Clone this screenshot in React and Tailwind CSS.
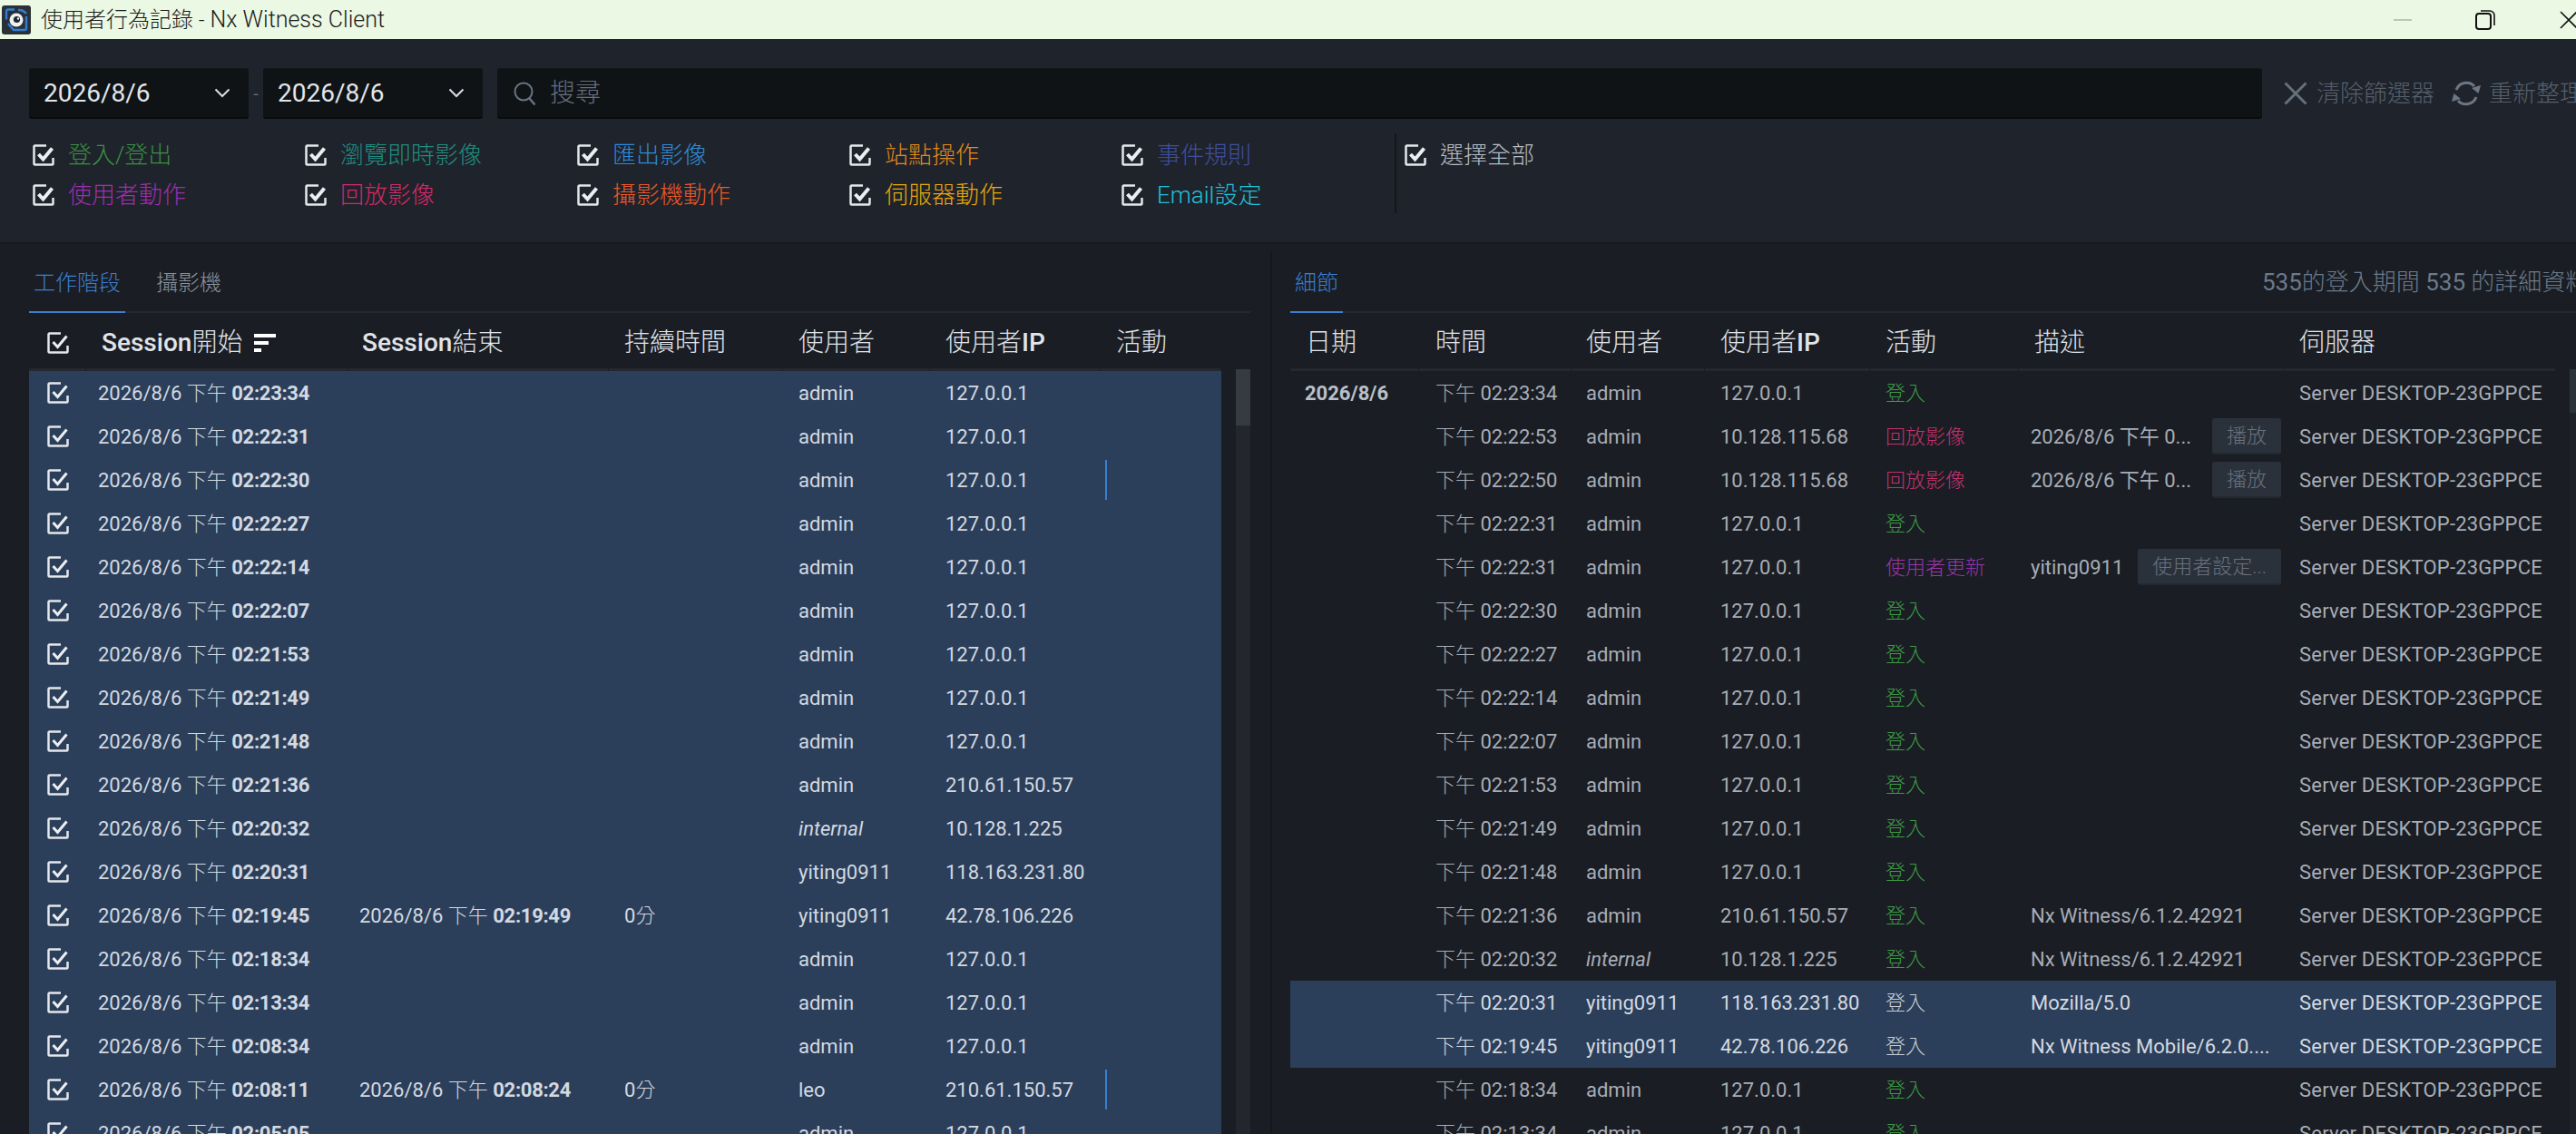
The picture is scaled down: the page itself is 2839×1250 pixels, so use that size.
import React from 'react';

const FONT = "font-['Roboto','Noto_Sans_CJK_TC',sans-serif]";

const filters = [
  { label: '登入/登出', color: 'text-[#3a9142]' },
  { label: '瀏覽即時影像', color: 'text-[#1f8d80]' },
  { label: '匯出影像', color: 'text-[#2f8ad6]' },
  { label: '站點操作', color: 'text-[#e58a1c]' },
  { label: '事件規則', color: 'text-[#3f4f9f]' },
  { label: '使用者動作', color: 'text-[#9c2fae]' },
  { label: '回放影像', color: 'text-[#d42a68]' },
  { label: '攝影機動作', color: 'text-[#e8592a]' },
  { label: '伺服器動作', color: 'text-[#e8a80c]' },
  { label: 'Email設定', color: 'text-[#22c0d8]' },
];

const sessions = [
  ['02:23:34', '', false, 'admin', '127.0.0.1'],
  ['02:22:31', '', false, 'admin', '127.0.0.1'],
  ['02:22:30', '', false, 'admin', '127.0.0.1', true],
  ['02:22:27', '', false, 'admin', '127.0.0.1'],
  ['02:22:14', '', false, 'admin', '127.0.0.1'],
  ['02:22:07', '', false, 'admin', '127.0.0.1'],
  ['02:21:53', '', false, 'admin', '127.0.0.1'],
  ['02:21:49', '', false, 'admin', '127.0.0.1'],
  ['02:21:48', '', false, 'admin', '127.0.0.1'],
  ['02:21:36', '', false, 'admin', '210.61.150.57'],
  ['02:20:32', '', false, 'internal', '10.128.1.225'],
  ['02:20:31', '', false, 'yiting0911', '118.163.231.80'],
  ['02:19:45', '02:19:49', true, 'yiting0911', '42.78.106.226'],
  ['02:18:34', '', false, 'admin', '127.0.0.1'],
  ['02:13:34', '', false, 'admin', '127.0.0.1'],
  ['02:08:34', '', false, 'admin', '127.0.0.1'],
  ['02:08:11', '02:08:24', true, 'leo', '210.61.150.57', true],
  ['02:05:05', '', false, 'admin', '127.0.0.1'],
];

const login = { name: '登入', color: 'text-[#3c9a46]' };
const playback = { name: '回放影像', color: 'text-[#c2326e]' };
const userUpdate = { name: '使用者更新', color: 'text-[#9c35a8]' };

const details = [
  { time: '02:23:34', user: 'admin', ip: '127.0.0.1', act: login },
  { time: '02:22:53', user: 'admin', ip: '10.128.115.68', act: playback, desc: '2026/8/6 下午 0...', btn: '播放' },
  { time: '02:22:50', user: 'admin', ip: '10.128.115.68', act: playback, desc: '2026/8/6 下午 0...', btn: '播放' },
  { time: '02:22:31', user: 'admin', ip: '127.0.0.1', act: login },
  { time: '02:22:31', user: 'admin', ip: '127.0.0.1', act: userUpdate, desc: 'yiting0911', btn: '使用者設定...' },
  { time: '02:22:30', user: 'admin', ip: '127.0.0.1', act: login },
  { time: '02:22:27', user: 'admin', ip: '127.0.0.1', act: login },
  { time: '02:22:14', user: 'admin', ip: '127.0.0.1', act: login },
  { time: '02:22:07', user: 'admin', ip: '127.0.0.1', act: login },
  { time: '02:21:53', user: 'admin', ip: '127.0.0.1', act: login },
  { time: '02:21:49', user: 'admin', ip: '127.0.0.1', act: login },
  { time: '02:21:48', user: 'admin', ip: '127.0.0.1', act: login },
  { time: '02:21:36', user: 'admin', ip: '210.61.150.57', act: login, desc: 'Nx Witness/6.1.2.42921' },
  { time: '02:20:32', user: 'internal', ip: '10.128.1.225', act: login, desc: 'Nx Witness/6.1.2.42921' },
  { time: '02:20:31', user: 'yiting0911', ip: '118.163.231.80', act: login, desc: 'Mozilla/5.0', selected: true },
  { time: '02:19:45', user: 'yiting0911', ip: '42.78.106.226', act: login, desc: 'Nx Witness Mobile/6.2.0....', selected: true },
  { time: '02:18:34', user: 'admin', ip: '127.0.0.1', act: login },
  { time: '02:13:34', user: 'admin', ip: '127.0.0.1', act: login },
];

const LEFT_COLS = 'grid grid-cols-[63px_289px_287px_192px_162px_188px_133px]';
const RIGHT_COLS = 'grid grid-cols-[142px_168px_147px_182px_164px_292px_300px]';

const CheckBox = ({ heavy }) => (
  <svg width="24" height="24" viewBox="0 0 24 24" fill="none" className="shrink-0">
    <path d="M15 1.500H2.500a1 1 0 0 0-1 1v19a1 1 0 0 0 1 1h19a1 1 0 0 0 1-1V15" stroke="#e4e7eb" strokeWidth="2.500" />
    <path d="M6.500 11l5 5.500L21.500 4.500" stroke="#eceef1" strokeWidth={heavy ? 4 : 3} />
  </svg>
);

const Logo = () => (
  <svg width="32" height="32" viewBox="0 0 32 32" className="shrink-0">
    <rect x="0" y="0" width="32" height="32" rx="3" fill="#2b3037" />
    <path d="M14 4.500H7a2 2 0 0 0-2 2v9" stroke="#2f7fd6" strokeWidth="2.400" fill="none" />
    <path d="M7 20l6 7h12a2 2 0 0 0 2-2V12" stroke="#2f7fd6" strokeWidth="2.400" fill="none" />
    <path d="M18 5a11 11 0 0 1 9 4" stroke="#2f7fd6" strokeWidth="2.400" fill="none" />
    <circle cx="16" cy="16" r="7.500" fill="#eef1f3" />
    <circle cx="16.500" cy="15.500" r="3.600" fill="#20252b" />
    <circle cx="18" cy="14.500" r="1.200" fill="#eef1f3" />
  </svg>
);

const WindowControls = () => (
  <div className="ml-auto flex items-center">
    <div className="h-[2px] w-[20px] bg-[#bcc6b8]" />
    <svg width="22" height="22" viewBox="0 0 22 22" fill="none" className="ml-[70px]">
      <rect x="1" y="4" width="16" height="17" rx="3" stroke="#111" strokeWidth="2" />
      <path d="M6 1h10a5 5 0 0 1 5 5v11" stroke="#111" strokeWidth="1.600" />
    </svg>
    <svg width="20" height="20" viewBox="0 0 20 20" fill="none" className="ml-[71px] mr-[-2px]">
      <path d="M1 1l18 18M19 1L1 19" stroke="#111" strokeWidth="1.600" />
    </svg>
  </div>
);

const Chevron = () => (
  <svg width="18" height="11" viewBox="0 0 18 11" fill="none">
    <path d="M1.500 1.500L9 9l7.500-7.500" stroke="#d8dde3" strokeWidth="2" />
  </svg>
);

const DateBox = ({ value }) => (
  <div className="flex h-[56px] w-[242px] shrink-0 items-center justify-between rounded-[3px] border-b-2 border-b-[#090b0d] border-t border-t-[#14181c] bg-[#0f1316] pl-[16px] pr-[20px]">
    <span className="text-[28px] text-[#e2e6ea]">{value}</span>
    <Chevron />
  </div>
);

const SearchIcon = () => (
  <svg width="26" height="28" viewBox="0 0 26 28" fill="none" className="shrink-0">
    <circle cx="11" cy="12" r="9.500" stroke="#6a7482" strokeWidth="2" />
    <path d="M17.500 19.500l6 7" stroke="#6a7482" strokeWidth="2.400" />
  </svg>
);

const ClearIcon = () => (
  <svg width="26" height="26" viewBox="0 0 26 26" fill="none" className="shrink-0">
    <path d="M1.500 1.500l23 23M24.500 1.500l-23 23" stroke="#66707c" strokeWidth="3" />
  </svg>
);

const RefreshIcon = () => (
  <svg width="34" height="30" viewBox="0 0 34 30" fill="none" className="shrink-0">
    <path d="M6 11A12 12 0 0 1 26 7" stroke="#6c7785" strokeWidth="3" />
    <path d="M33 6l-2.500 9-7.500-6z" fill="#6c7785" />
    <path d="M28 19A12 12 0 0 1 8 23" stroke="#6c7785" strokeWidth="3" />
    <path d="M1 24l2.500-9 7.500 6z" fill="#6c7785" />
  </svg>
);

const SortIcon = () => (
  <div className="ml-[13px] flex flex-col gap-[4px]">
    <div className="h-[4px] w-[24px] bg-white" />
    <div className="h-[4px] w-[16px] bg-white" />
    <div className="h-[4px] w-[8px] bg-white" />
  </div>
);

const Toolbar = () => (
  <div className="h-[226px] shrink-0 border-b-2 border-[#15181c] bg-[#1f232b] pl-[32px] pt-[32px]">
    <div className="flex items-center">
      <DateBox value="2026/8/6" />
      <span className="w-[16px] shrink-0 text-center text-[20px] text-[#5f6873]">-</span>
      <DateBox value="2026/8/6" />
      <div className="ml-[16px] flex h-[56px] w-[1945px] shrink-0 items-center rounded-[3px] border-b-2 border-b-[#090b0d] border-t border-t-[#14181c] bg-[#0f1316] pl-[18px]">
        <SearchIcon />
        <span className="ml-[14px] text-[28px] font-light text-[#666f7b]">搜尋</span>
      </div>
      <div className="ml-[24px] flex shrink-0 items-center">
        <ClearIcon />
        <span className="ml-[10px] text-[26px] font-light text-[#56606c]">清除篩選器</span>
      </div>
      <div className="ml-[18px] flex shrink-0 items-center">
        <RefreshIcon />
        <span className="ml-[8px] whitespace-nowrap text-[26px] font-light text-[#56606c]">重新整理</span>
      </div>
    </div>
    <div className="mt-[16px] flex">
      <div className="ml-[4px] mt-[8px] grid w-[1500px] grid-cols-[repeat(5,300px)] content-start gap-y-[12px]">
        {filters.map(item => (
          <div key={item.label} className="flex h-[32px] items-center gap-[15px]">
            <CheckBox heavy />
            <span className={`text-[26px] font-light leading-[32px] ${item.color}`}>{item.label}</span>
          </div>
        ))}
      </div>
      <div className="ml-[1px] h-[88px] w-[2px] bg-[#14171b]" />
      <div className="ml-[9px] mt-[8px] flex h-[32px] items-center gap-[15px]">
        <CheckBox heavy />
        <span className="text-[26px] font-light text-[#b6bcc4]">選擇全部</span>
      </div>
    </div>
  </div>
);

const Tab = ({ label, active, className = '' }) => (
  <div
    className={`-mb-[2px] h-[76px] shrink-0 whitespace-nowrap border-b-2 px-[5px] pt-[25px] text-[24px] font-light leading-[36px] ${
      active ? 'border-[#3b7fd0] text-[#3b7fd0]' : 'border-transparent text-[#8a929c]'
    } ${className}`}
  >
    {label}
  </div>
);

const HeadCell = ({ children, pad = 'pl-[17px]' }) => (
  <div className={`mr-px flex h-[64px] items-center whitespace-nowrap border-b-[3px] border-[#24282f] pt-[4px] text-[28px] font-light text-[#e0e4ea] ${pad}`}>
    {children}
  </div>
);

const Scrollbar = ({ track, thumb, width, height }) => (
  <div className={`mt-[62px] ${width} ${track} flex-1`}>
    <div className={`${height} ${thumb}`} />
  </div>
);

const SessionPanel = () => (
  <div className="flex w-[1346px] shrink-0 flex-col">
    <div className="flex h-[76px] border-b-2 border-[#24282f]">
      <Tab label="工作階段" active />
      <Tab label="攝影機" className="ml-[29px]" />
    </div>
    <div className="flex flex-1 gap-[16px] overflow-hidden">
      <div className="w-[1314px] shrink-0">
        <div className={LEFT_COLS}>
          <HeadCell pad="pl-[20px]"><CheckBox /></HeadCell>
          <HeadCell><span className="font-medium">Session</span>開始<SortIcon /></HeadCell>
          <HeadCell pad="pl-[15px]"><span className="font-medium">Session</span>結束</HeadCell>
          <HeadCell pad="pl-[17px]">持續時間</HeadCell>
          <HeadCell>使用者</HeadCell>
          <HeadCell>使用者<span className="font-medium">IP</span></HeadCell>
          <HeadCell pad="pl-[17px]">活動</HeadCell>
        </div>
        {sessions.map(([start, end, hasDuration, user, ip, marker]) => (
          <div key={start} className={`${LEFT_COLS} h-[48px] items-center whitespace-nowrap bg-[#2b3f5a] text-[22px] text-[#d3d9e1]`}>
            <div className="pl-[20px]"><CheckBox /></div>
            <div className="pl-[13px]">2026/8/6 <span className="font-light">下午</span> <b className="tracking-[-0.3px]">{start}</b></div>
            <div className="pl-[12px]">{end && <>2026/8/6 <span className="font-light">下午</span> <b className="tracking-[-0.3px]">{end}</b></>}</div>
            <div className="pl-[17px]">{hasDuration && <>0<span className="font-light">分</span></>}</div>
            <div className={`pl-[17px] ${user === 'internal' ? 'italic' : ''}`}>{user}</div>
            <div className="pl-[17px]">{ip}</div>
            <div className="pl-[5px]">{marker && <div className="h-[44px] w-[2px] bg-[#3b7fd0]" />}</div>
          </div>
        ))}
      </div>
      <Scrollbar width="w-[16px]" track="bg-[#23272d]" thumb="bg-[#363b42]" height="h-[62px]" />
    </div>
  </div>
);

const PlayButton = ({ label }) => (
  <button className="h-[40px] shrink-0 rounded-[3px] border-b-2 border-[#242931] bg-[#2b313b] px-[16px] text-[22px] font-light text-[#68717d]">
    {label}
  </button>
);

const DetailPanel = () => (
  <div className="flex min-w-0 flex-1 flex-col">
    <div className="flex h-[76px] border-b-2 border-[#24282f]">
      <Tab label="細節" active />
      <div className="ml-[1013px] shrink-0 whitespace-nowrap pt-[24px] text-[26px] font-light leading-[36px] text-[#6b7a8c]">
        <span className="font-normal">535</span>的登入期間 <span className="font-normal">535</span> 的詳細資料
      </div>
    </div>
    <div className="flex flex-1 gap-[15px] overflow-hidden">
      <div className="w-[1395px] shrink-0">
        <div className={RIGHT_COLS}>
          <HeadCell pad="pl-[17px]">日期</HeadCell>
          <HeadCell pad="pl-[18px]">時間</HeadCell>
          <HeadCell pad="pl-[16px]">使用者</HeadCell>
          <HeadCell pad="pl-[17px]">使用者<span className="font-medium">IP</span></HeadCell>
          <HeadCell pad="pl-[17px]">活動</HeadCell>
          <HeadCell>描述</HeadCell>
          <HeadCell>伺服器</HeadCell>
        </div>
        {details.map((row, index) => (
          <div
            key={index}
            className={`${RIGHT_COLS} h-[48px] items-center whitespace-nowrap text-[22px] ${
              row.selected ? 'bg-[#2b3f5a] text-[#d3d9e1]' : 'text-[#a7adb7]'
            }`}
          >
            <div className="pl-[16px] font-bold text-[#b9c0ca]">{index === 0 ? '2026/8/6' : ''}</div>
            <div className="pl-[18px]"><span className="font-light">下午</span> {row.time}</div>
            <div className={`pl-[16px] ${row.user === 'internal' ? 'italic' : ''}`}>{row.user}</div>
            <div className="pl-[17px]">{row.ip}</div>
            <div className={`pl-[17px] font-light ${row.selected ? 'text-[#c8ced6]' : row.act.color}`}>{row.act.name}</div>
            <div className="flex items-center justify-between pl-[13px] pr-[3px]">
              <span>{row.desc}</span>
              {row.btn && <PlayButton label={row.btn} />}
            </div>
            <div className="pl-[17px] tracking-[0.2px]">Server DESKTOP-23GPPCE</div>
          </div>
        ))}
      </div>
      <Scrollbar width="w-[7px]" track="bg-[#1f2329]" thumb="bg-[#2d333a]" height="h-[48px]" />
    </div>
  </div>
);

const App = () => {
  return (
    <div className={`flex h-[1250px] w-[2839px] flex-col overflow-hidden bg-[#1a1d23] ${FONT}`}>
      {/* Title bar */}
      <div className="flex h-[43px] shrink-0 items-center bg-[#ebf8e4] pl-[2px]">
        <Logo />
        <span className="ml-[11px] text-[24px] font-light text-[#1a1a1a]">使用者行為記錄 - <span className="text-[25px]">Nx Witness Client</span></span>
        <WindowControls />
      </div>

      <Toolbar />

      {/* Main */}
      <div className="flex min-h-0 flex-1 pl-[32px]">
        <SessionPanel />
        <div className="ml-[22px] mr-[20px] mt-[8px] w-[2px] shrink-0 bg-[#14171b]" />
        <DetailPanel />
      </div>
    </div>
  );
};

export default App;
